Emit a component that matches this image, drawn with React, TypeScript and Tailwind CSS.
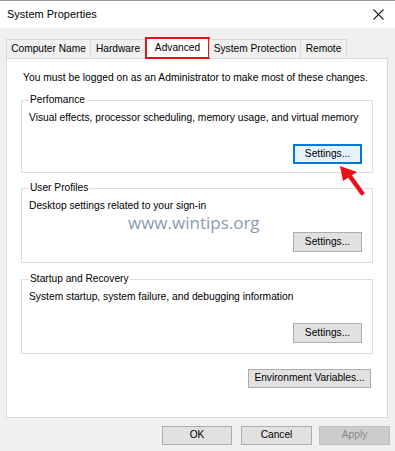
import React from "react";

function Btn({
  label,
  className = "",
  focused = false,
  disabled = false,
}: {
  label: string;
  className?: string;
  focused?: boolean;
  disabled?: boolean;
}) {
  const base = "flex items-center justify-center text-[10.2px] leading-none";
  const look = disabled
    ? "bg-[#cccccc] border border-[#bfbfbf] text-[#8a8a8a]"
    : focused
    ? "bg-[#e5f1fb] border-2 border-[#0078d7] text-black"
    : "bg-[#e1e1e1] border border-[#adadad] text-black";
  return <div className={`${base} ${look} ${className}`}>{label}</div>;
}

function Group({
  title,
  text,
  className = "",
  focused = false,
}: {
  title: string;
  text: string;
  className?: string;
  focused?: boolean;
}) {
  return (
    <fieldset
      className={`mx-[14px] border border-[#dcdcdc] px-[7px] flex flex-col ${className}`}
    >
      <legend className="px-[1px] text-[10.2px] leading-[12px] text-black">{title}</legend>
      <div className="mt-[6px] text-[10.25px] leading-[12px]">{text}</div>
      <div className="flex justify-end mt-[20px] pr-[3px]">
        <Btn label="Settings..." focused={focused} className="w-[69px] h-[20px]" />
      </div>
    </fieldset>
  );
}

export default function App() {
  return (
    <div className="relative w-[395px] h-[451px] bg-[#f0f0f0] overflow-hidden text-black font-['Liberation_Sans',Arial,sans-serif]">
      {/* title bar */}
      <div className="h-[28px] bg-white border-t border-[#9a9a9a] flex items-center justify-between pl-[7px] pr-[11px]">
        <span className="text-[11px] leading-none">System Properties</span>
        <svg width="11" height="11" viewBox="0 0 11 11">
          <path d="M0.5 0.5 L10.5 10.5 M10.5 0.5 L0.5 10.5" stroke="#222" strokeWidth="1.1" />
        </svg>
      </div>

      <div className="pl-[6px] pr-[7px] pt-[9px]">
        {/* tabs */}
        <div className="flex items-end h-[21px] relative z-10">
          <div className="w-[85px] h-[19px] border border-b-0 border-[#d9d9d9] bg-[#f0f0f0] flex items-center justify-center text-[10.2px]">
            Computer Name
          </div>
          <div className="w-[56px] h-[19px] -ml-px border border-b-0 border-[#d9d9d9] bg-[#f0f0f0] flex items-center justify-center text-[10.2px]">
            Hardware
          </div>
          <div className="w-[65px] h-[22px] -mb-px -ml-px bg-white border-2 border-[#e8111a] flex items-center justify-center text-[10.2px]">
            Advanced
          </div>
          <div className="w-[92px] h-[19px] -ml-px border border-b-0 border-[#d9d9d9] bg-[#f0f0f0] flex items-center justify-center text-[10.2px]">
            System Protection
          </div>
          <div className="w-[47px] h-[19px] -ml-px border border-b-0 border-[#d9d9d9] bg-[#f0f0f0] flex items-center justify-center text-[10.2px]">
            Remote
          </div>
        </div>

        {/* panel */}
        <div className="h-[360px] bg-white border border-[#d9d9d9] flex flex-col">
          <div className="mt-[13px] ml-[16px] text-[10.3px] leading-[12px] whitespace-nowrap">
            You must be logged on as an Administrator to make most of these changes.
          </div>
          <Group
            className="mt-[10px] h-[79px]"
            title="Perfomance"
            text="Visual effects, processor scheduling, memory usage, and virtual memory"
            focused
          />
          <Group
            className="mt-[9px] h-[81px]"
            title="User Profiles"
            text="Desktop settings related to your sign-in"
          />
          <Group
            className="mt-[10px] h-[81px]"
            title="Startup and Recovery"
            text="System startup, system failure, and debugging information"
          />
          <div className="flex justify-end mt-[15px] pr-[16px]">
            <Btn label="Environment Variables..." className="w-[123px] h-[19px]" />
          </div>
        </div>

        {/* bottom buttons */}
        <div className="flex justify-end gap-[9px] mt-[8px] mr-[-2px]">
          <Btn label="OK" className="w-[70px] h-[19px]" />
          <Btn label="Cancel" className="w-[71px] h-[19px]" />
          <Btn label="Apply" disabled className="w-[71px] h-[19px] -ml-[2px]" />
        </div>
      </div>

      {/* watermark */}
      <div className="absolute left-[128px] top-[213px] text-[17px] leading-[20px] tracking-[0px] text-[#8b9ab0] font-['Open_Sans',sans-serif]">
        www.wintips.org
      </div>

      {/* red arrow */}
      <svg className="absolute left-[334px] top-[160px]" width="34" height="36" viewBox="0 0 34 36">
        <polygon points="6,6 9,21 23,12" fill="#e8111a" />
        <line x1="15" y1="15" x2="28" y2="33" stroke="#e8111a" strokeWidth="4.5" strokeLinecap="round" />
      </svg>
    </div>
  );
}
